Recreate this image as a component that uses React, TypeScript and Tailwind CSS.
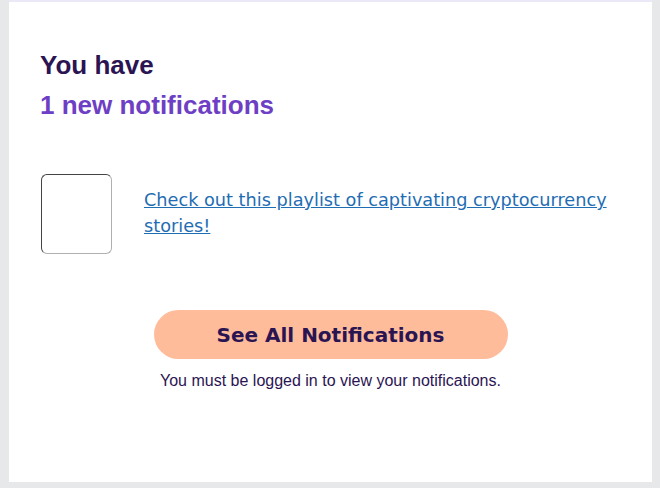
export default function App() {
  return (
    <div className="w-[660px] h-[488px] bg-[#e7e8ea] pl-[9px] pr-[8px] pb-[6px]">
      <div className="h-full bg-white border-t-2 border-[#ebe8f8] px-[31px] pt-[43px]">
        <h2 className="font-['Liberation_Sans',sans-serif] font-bold text-[26px] leading-[40px] text-[#2b1452]">
          You have
          <br />
          <span className="text-[#6e3fc4]">1 new notifications</span>
        </h2>

        <div className="mt-[49px] flex items-center">
          <div className="w-[71px] h-[80px] ml-[1px] shrink-0 rounded-[6px] border border-t-[#444] border-l-[#444] border-r-[#b0b0b0] border-b-[#b0b0b0]" />
          <a
            href="#"
            className="ml-[32px] font-['DejaVu_Sans',sans-serif] text-[17.7px] leading-[26px] text-[#1f6db3] underline pb-[2px]"
          >
            Check out this playlist of captivating cryptocurrency stories!
          </a>
        </div>

        <div className="mt-[56px] flex flex-col items-center">
          <button className="w-[354px] h-[49px] rounded-full bg-[#ffbc9b] font-['DejaVu_Sans',sans-serif] font-bold text-[20px] text-[#2b1452]">
            See All Notifications
          </button>
          <p className="mt-[10px] font-['Liberation_Sans',sans-serif] text-[16px] text-[#2b1452]">
            You must be logged in to view your notifications.
          </p>
        </div>
      </div>
    </div>
  );
}
